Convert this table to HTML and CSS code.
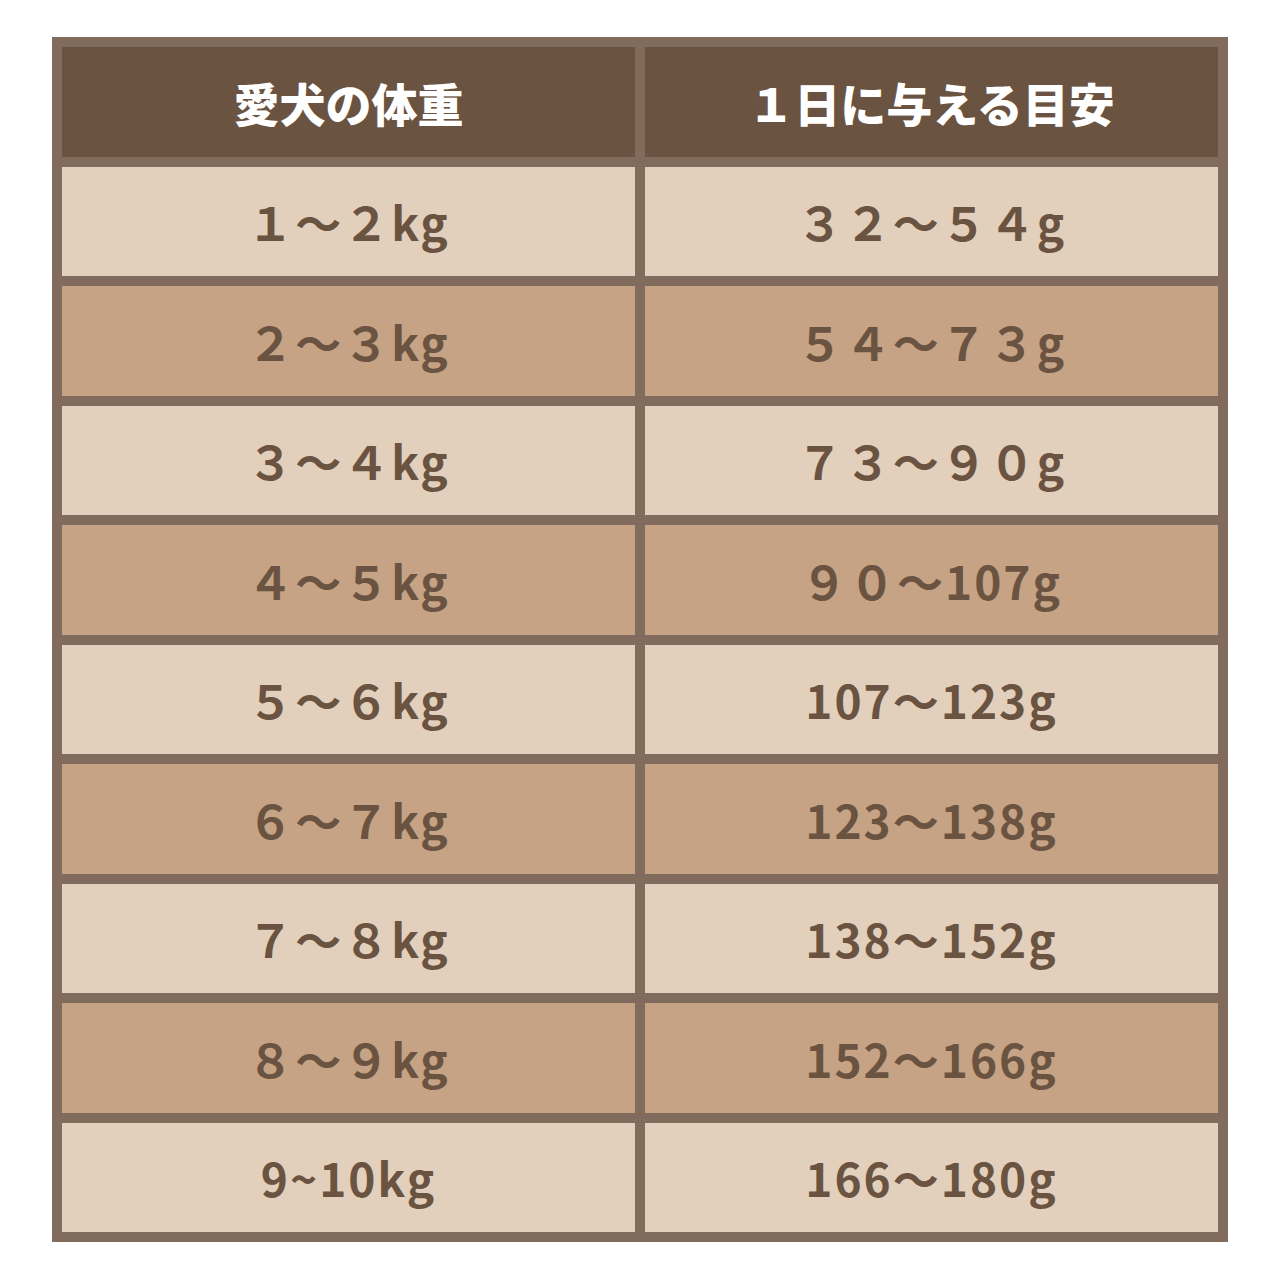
FILE: index.html
```html
<!DOCTYPE html>
<html lang="ja">
<head>
<meta charset="utf-8">
<title>愛犬の体重</title>
<link rel="stylesheet" href="styles.css">
</head>
<body>
<div class="table">
  <div class="cell head">愛犬の体重</div>
  <div class="cell head">１日に与える目安</div>
  <div class="cell light">１～２kg</div>
  <div class="cell light">３２～５４g</div>
  <div class="cell dark">２～３kg</div>
  <div class="cell dark">５４～７３g</div>
  <div class="cell light">３～４kg</div>
  <div class="cell light">７３～９０g</div>
  <div class="cell dark">４～５kg</div>
  <div class="cell dark">９０～107g</div>
  <div class="cell light">５～６kg</div>
  <div class="cell light">107～123g</div>
  <div class="cell dark">６～７kg</div>
  <div class="cell dark">123～138g</div>
  <div class="cell light">７～８kg</div>
  <div class="cell light">138～152g</div>
  <div class="cell dark">８～９kg</div>
  <div class="cell dark">152～166g</div>
  <div class="cell light">9~10kg</div>
  <div class="cell light">166～180g</div>
</div>
</body>
</html>
```
FILE: styles.css
```css
html, body {
  margin: 0;
  padding: 0;
  background: #ffffff;
}
body {
  padding: 37px 0 0 52px;
}
.table {
  box-sizing: border-box;
  width: 1176px;
  height: 1205px;
  padding: 10px;
  background: #806b5d;
  display: grid;
  grid-template-columns: 1fr 1fr;
  grid-template-rows: repeat(10, 1fr);
  gap: 10px;
}
.cell {
  display: flex;
  align-items: center;
  justify-content: center;
  font-family: "Noto Sans CJK JP", "Noto Sans", sans-serif;
  font-size: 46px;
  color: #6b5342;
  font-weight: 700;
  letter-spacing: 2px;
}
.head {
  background: #6b5341;
  color: #ffffff;
  font-weight: 900;
  letter-spacing: 0;
}
.light {
  background: #e3d0bc;
}
.dark {
  background: #c6a384;
}
```
